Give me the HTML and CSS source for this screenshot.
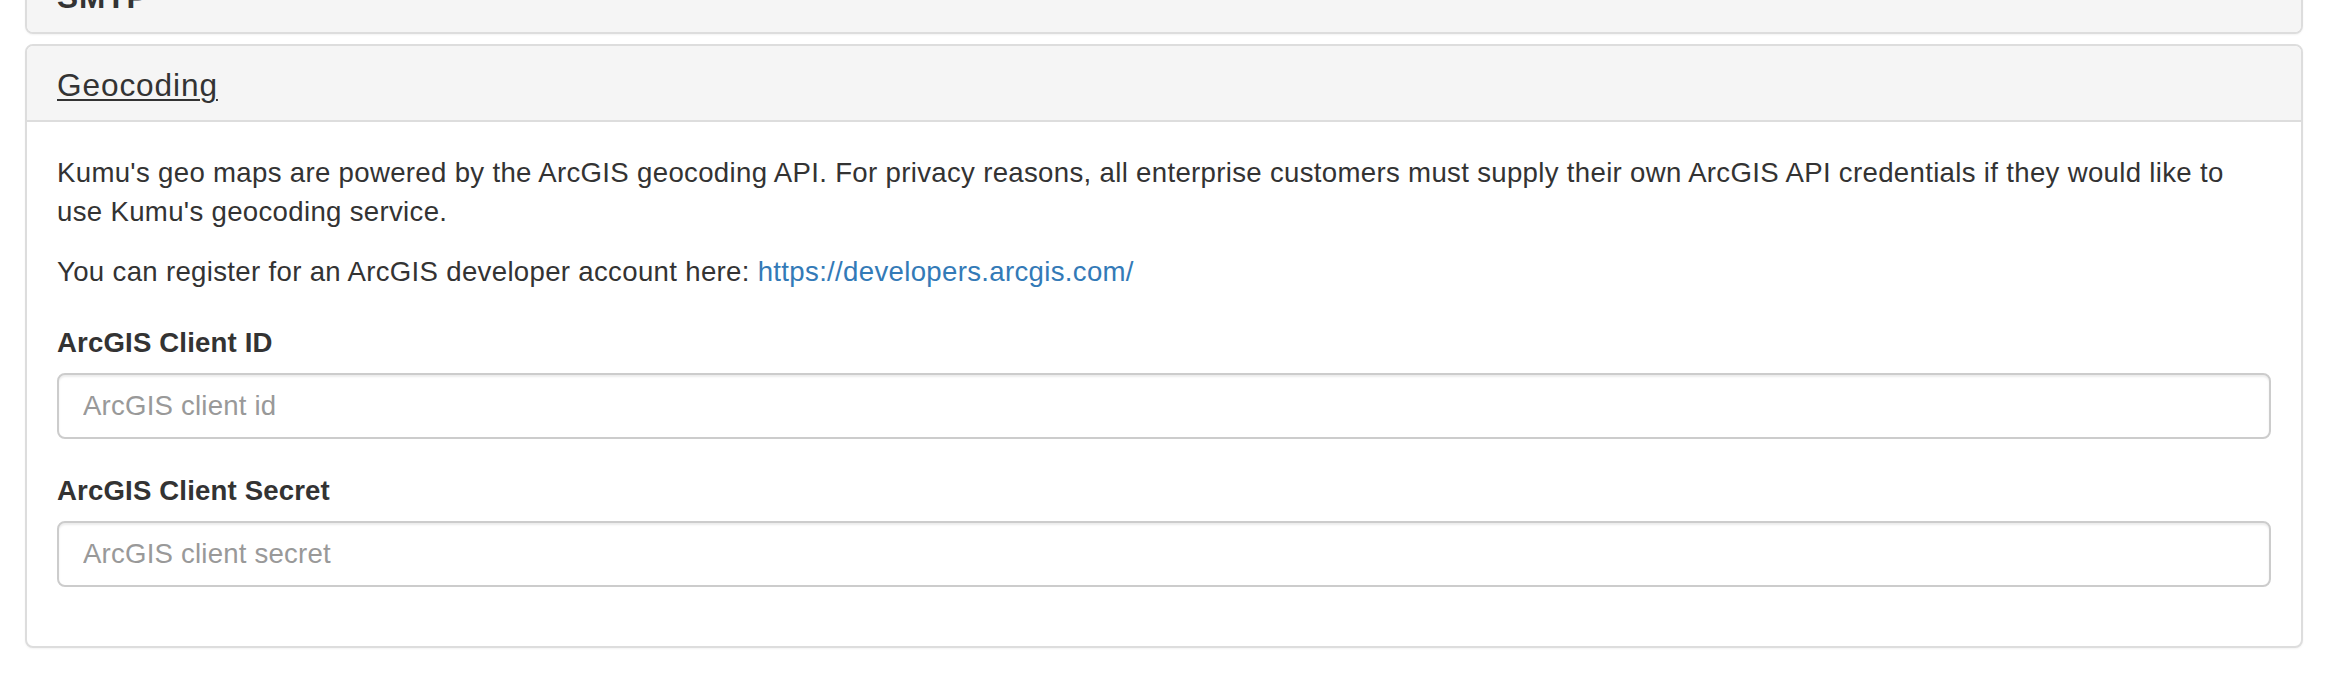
FILE: index.html
```html
<!DOCTYPE html>
<html lang="en">
<head>
<meta charset="utf-8">
<title>Geocoding settings</title>
<link rel="stylesheet" href="styles.css">
</head>
<body>
<div class="page">
  <section class="panel">
    <div class="panel-heading panel-heading--collapsed">
      <h3 class="panel-title panel-title--bold">SMTP</h3>
    </div>
  </section>
  <section class="panel">
    <div class="panel-heading">
      <h3 class="panel-title"><a class="panel-link" href="#">Geocoding</a></h3>
    </div>
    <div class="panel-body">
      <p class="text">Kumu's geo maps are powered by the ArcGIS geocoding API. For privacy reasons, all enterprise customers must supply their own ArcGIS API credentials if they would like to use Kumu's geocoding service.</p>
      <p class="text">You can register for an ArcGIS developer account here: <a class="link" href="#">https://developers.arcgis.com/</a></p>
      <form class="form">
        <div class="form-group">
          <label class="label" for="cid">ArcGIS Client ID</label>
          <input class="input" id="cid" type="text" placeholder="ArcGIS client id">
        </div>
        <div class="form-group">
          <label class="label" for="csecret">ArcGIS Client Secret</label>
          <input class="input" id="csecret" type="text" placeholder="ArcGIS client secret">
        </div>
      </form>
    </div>
  </section>
</div>
</body>
</html>
```

FILE: styles.css
```css
* { box-sizing: border-box; }

html, body {
  margin: 0;
  padding: 0;
  background: #fff;
}

body {
  font-family: "Liberation Sans", Arial, Helvetica, sans-serif;
  font-size: 27.6px;
  line-height: 39.4px;
  letter-spacing: 0.32px;
  color: #333;
}

.page {
  margin-top: -44px;
  padding: 0 27px 0 25px;
}

.panel {
  background: #fff;
  border: 2px solid #ddd;
  border-radius: 8px;
  box-shadow: 0 1px 2px rgba(0, 0, 0, 0.05);
  margin-bottom: 10px;
  overflow: hidden;
}

.panel-heading {
  background: #f5f5f5;
  padding: 22px 30px 18px;
  border-bottom: 2px solid #ddd;
}

.panel-heading--collapsed {
  border-bottom: 0;
}

.panel-title {
  margin: 0;
  font-size: 31.6px;
  line-height: 34px;
  letter-spacing: 0.9px;
  font-weight: normal;
  color: #333;
}

.panel-title--bold {
  font-weight: bold;
}

.panel-link {
  color: #333;
  text-decoration: underline;
  text-decoration-thickness: 2px;
  text-underline-offset: 3px;
}

.panel-body {
  padding: 31px 30px 27px;
}

.text {
  margin: 0 0 19.7px;
}

.link {
  color: #337ab7;
  text-decoration: none;
}

.form {
  padding-top: 12px;
}

.form-group {
  margin-bottom: 32px;
}

.label {
  display: inline-block;
  font-weight: bold;
  letter-spacing: 0.15px;
  margin-bottom: 11px;
}

.input {
  display: block;
  width: 100%;
  height: 66px;
  padding: 12px 24px;
  font-family: inherit;
  font-size: 27.6px;
  line-height: 39.4px;
  letter-spacing: 0.2px;
  color: #555;
  background: #fff;
  border: 2px solid #ccc;
  border-radius: 8px;
  box-shadow: inset 0 2px 2px rgba(0, 0, 0, 0.075);
  outline: none;
}

.input::placeholder {
  color: #999;
  opacity: 1;
}
```
